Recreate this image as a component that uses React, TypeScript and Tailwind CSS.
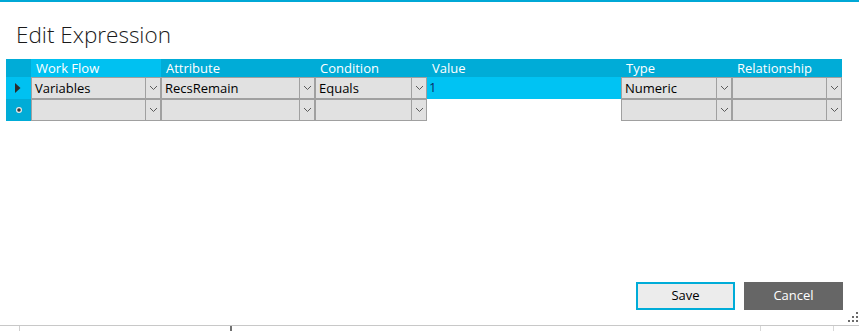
const cols = ['Work Flow', 'Attribute', 'Condition', 'Value', 'Type', 'Relationship'];

function Chevron() {
  return (
    <svg width="9" height="6" viewBox="0 0 9 6">
      <path d="M1 1 L4.5 4.5 L8 1" fill="none" stroke="#5a5a5a" strokeWidth="1" />
    </svg>
  );
}

function Combo({ text }: { text?: string }) {
  return (
    <div className="flex h-[22px] border border-[#a0a0a0] bg-[#e1e1e1]">
      <div className="flex-1 truncate pl-[3px] leading-[20px] text-black">{text}</div>
      <div className="flex w-[15px] items-center justify-center border-l border-[#a0a0a0]">
        <Chevron />
      </div>
    </div>
  );
}

export default function App() {
  return (
    <div
      className="flex h-[331px] w-full flex-col bg-white text-[13px]"
      style={{ fontFamily: '"Open Sans", "Noto Sans", sans-serif' }}
    >
      <div className="h-[2px] bg-[#00a8d6]" />

      {/* title */}
      <div className="h-[57px] pl-[16px] pt-[18px]">
        <h1 className="text-[22.5px] font-light leading-[30px] text-[#1a1a1a]">Edit Expression</h1>
      </div>

      {/* grid */}
      <div className="ml-[6px] grid w-[836px] grid-cols-[25px_130px_154px_112px_194px_111px_110px]">
        <div className="h-[18px] bg-[#00acd7]" />
        {cols.map((c, i) => (
          <div
            key={c}
            className={`h-[18px] pl-[5px] leading-[18px] text-white ${i === 0 ? 'bg-[#00c1f1]' : 'bg-[#00acd7]'}`}
          >
            {c}
          </div>
        ))}

        {/* row 1 */}
        <div className="flex h-[22px] items-center bg-[#00c1f1] pl-[9px]">
          <svg width="6" height="10" viewBox="0 0 6 10">
            <path d="M0 0 L5.5 5 L0 10 Z" fill="#2b2b2b" />
          </svg>
        </div>
        <Combo text="Variables" />
        <Combo text="RecsRemain" />
        <Combo text="Equals" />
        <div className="h-[22px] bg-[#00c3f3] pl-[2px] leading-[20px] text-[#0b2a66]">1</div>
        <Combo text="Numeric" />
        <Combo />

        {/* row 2 */}
        <div className="flex h-[22px] items-center bg-[#00acd7] pl-[9px]">
          <svg width="8" height="8" viewBox="0 0 8 8">
            <circle cx="4" cy="4" r="3" fill="#e8e8e8" />
            <circle cx="4" cy="4" r="1.8" fill="#3a3a3a" />
          </svg>
        </div>
        <Combo />
        <Combo />
        <Combo />
        <div className="h-[22px] bg-white" />
        <Combo />
        <Combo />
      </div>

      <div className="flex-1" />

      {/* buttons */}
      <div className="flex justify-end gap-[9px] pr-[16px]">
        <button className="h-[28px] w-[99px] border-2 border-[#00acd8] bg-[#ececec] text-black">Save</button>
        <button className="h-[28px] w-[99px] bg-[#666666] text-white">Cancel</button>
      </div>

      <div className="flex h-[15px] items-end justify-end pb-[3px] pr-[1px]">
        <svg width="10" height="10" viewBox="0 0 10 10" fill="#6a6a6a">
          <rect x="8" y="0" width="2" height="2" />
          <rect x="4" y="4" width="2" height="2" />
          <rect x="8" y="4" width="2" height="2" />
          <rect x="0" y="8" width="2" height="2" />
          <rect x="4" y="8" width="2" height="2" />
          <rect x="8" y="8" width="2" height="2" />
        </svg>
      </div>

      {/* status strip */}
      <div className="flex h-[6px] border-t border-[#c8c8c8]">
        <div className="w-[19px]" />
        <div className="w-[211px] border-l border-[#d0d0d0]" />
        <div className="w-[530px] border-l-2 border-[#707070]" />
        <div className="w-[73px] border-l border-[#d8d8d8]" />
        <div className="flex-1 border-l border-[#d8d8d8]" />
      </div>
    </div>
  );
}
